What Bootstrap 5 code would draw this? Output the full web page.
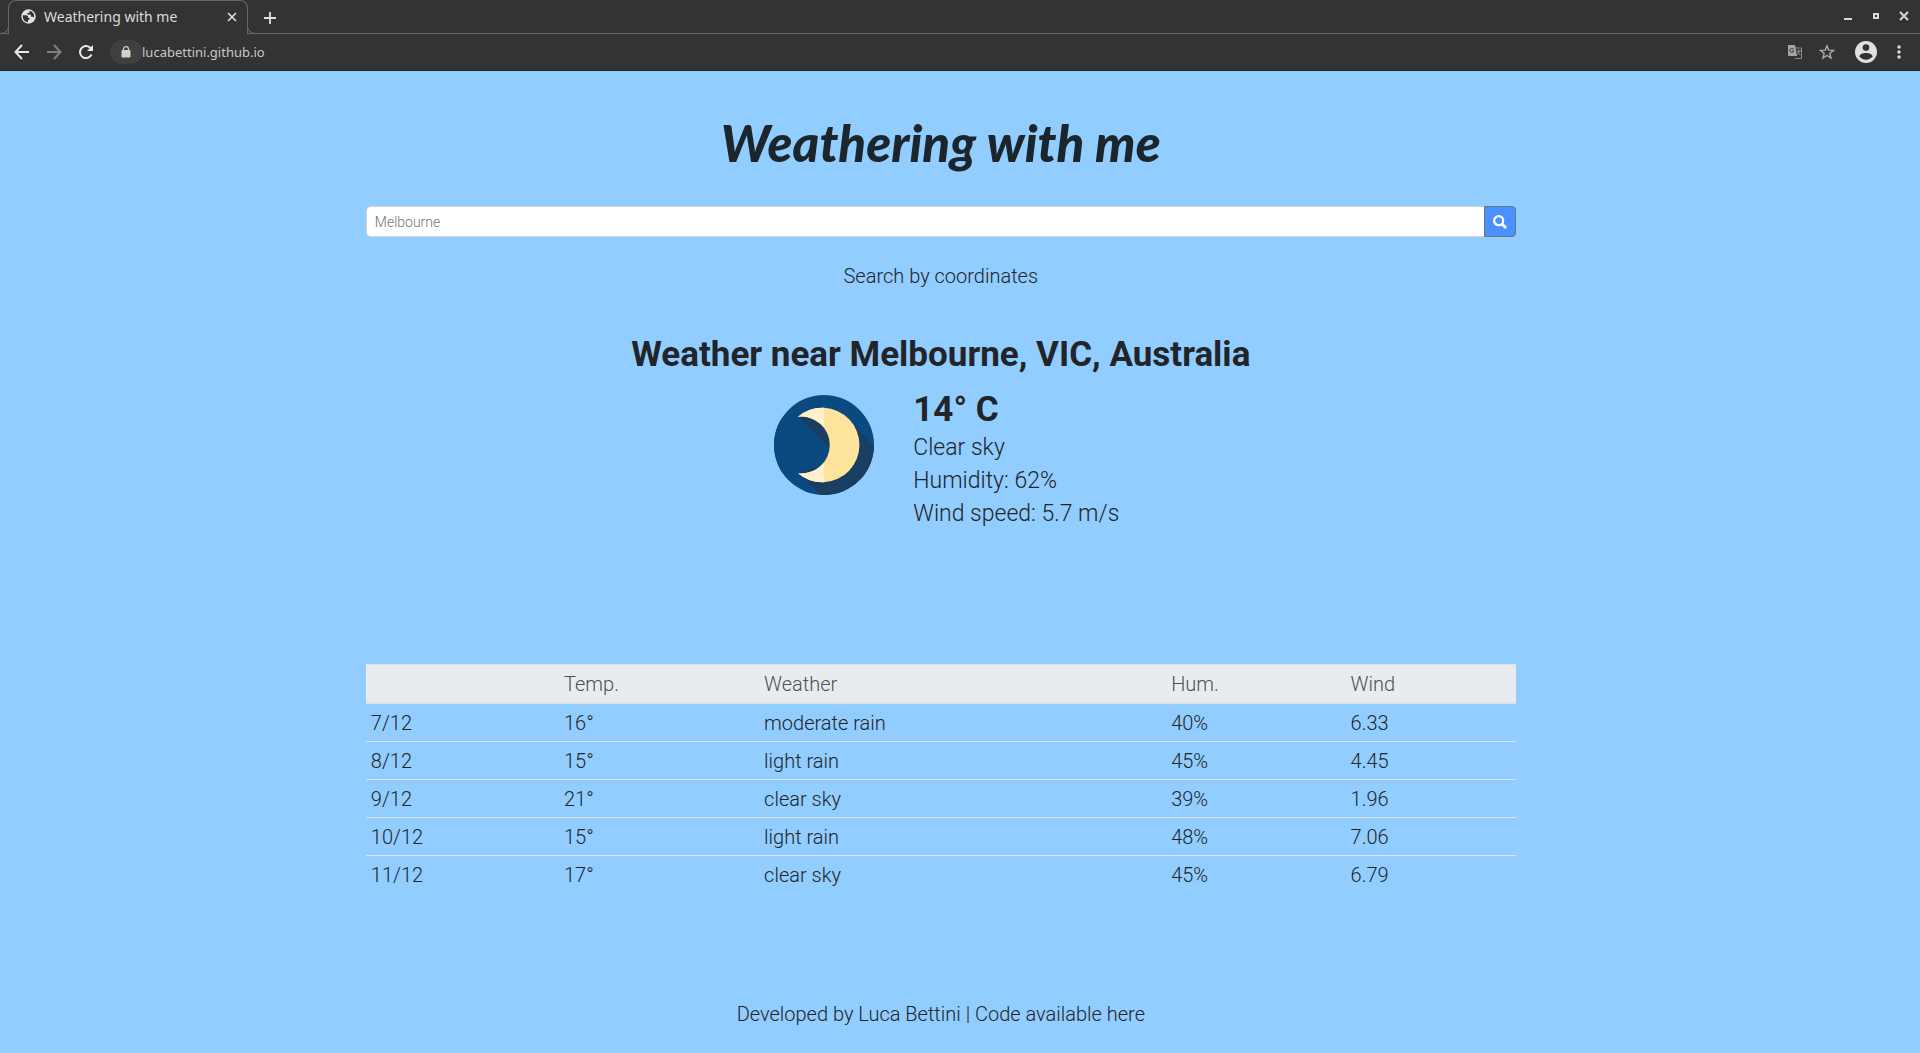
<!DOCTYPE html>
<html lang="en">
<head>
<meta charset="utf-8">
<meta name="viewport" content="width=device-width, initial-scale=1">
<title>Weathering with me</title>
<link href="https://cdn.jsdelivr.net/npm/bootstrap@5.3.0/dist/css/bootstrap.min.css" rel="stylesheet">
<style>
body{background:#92cdff;color:#212529;font-family:Roboto,"Liberation Sans",sans-serif;font-weight:300;font-size:20px;line-height:30px}
a{color:inherit;text-decoration:none}
svg{display:block;flex:none}
.browser{background:#333;color:#dcdcdc;font-family:"Noto Sans",sans-serif;font-weight:400;font-size:14px;line-height:20px;border-bottom:1px solid #262626}
.browser button{background:none;border:0;padding:0;color:inherit}
.tabstrip{height:34px;border-bottom:1px solid #666}
.tab{position:relative;width:240px;height:34px;margin-left:8px;padding:0 10px 2px 12px;background:#333;border:1px solid #666;border-bottom:0;border-radius:8px 8px 0 0}
.tab::before,.tab::after{content:"";position:absolute;bottom:0;width:9px;height:9px;background:#333;border-bottom:1px solid #666}
.tab::before{left:-9px;border-right:1px solid #666;border-bottom-right-radius:8px}
.tab::after{right:-9px;border-left:1px solid #666;border-bottom-left-radius:8px}
.window-controls{padding:0 10px 2px 0}
.toolbar{height:36px;padding:0 19px 0 14px}
.chip{width:32px;height:24px;border-radius:12px;background:#404040}
.address{background:none;border:0;outline:0;padding:0;color:#c8c8c8;font-size:13px}
.page{padding-right:2%}
.column{max-width:1150px}
.brand{font-family:Lato,sans-serif;font-style:italic;font-weight:900;font-size:51px;line-height:68px;margin:38px 0 29px;color:#1b262c}
.search .form-control{height:31px;font-size:14px;font-weight:300;border-color:#ced4da}
.search .form-control::placeholder{color:#6c757d}
.search .btn{width:32px;background:#4991ff;border-color:#6c757d;color:#fff}
.place,.degrees{font-size:35px;line-height:42px;font-weight:700}
.place{margin:43px 0 13px}
.now{font-size:23px;line-height:33px;column-gap:39px;min-height:275px;padding-left:12px}
.moon{margin-top:6px}
.forecast{--bs-table-bg:transparent;--bs-table-color:#212529;color:#212529;border-color:#dee2e6}
.forecast>:not(caption)>*>*{padding:5px 5px 3px;border-bottom:0;border-top:1px solid #dee2e6;line-height:29px}
.forecast thead th{background:#e9ecef;color:#495057;font-weight:300;border-bottom:2px solid #dee2e6}
.forecast tbody tr:first-child>*{border-top:0}
.c-day{width:16.8%}.c-temp{width:17.4%}.c-sky{width:35.4%}.c-hum{width:15.6%}
.credits{padding-top:58px}
</style>
<script src="https://cdn.jsdelivr.net/npm/bootstrap@5.3.0/dist/js/bootstrap.bundle.min.js"></script>
</head>
<body>
<header class="browser">
  <div class="tabstrip d-flex align-items-start">
    <div class="tab d-flex align-items-center">
      <svg width="15" height="15" viewBox="0 0 15 15" class="me-2"><circle cx="7.500" cy="7.500" r="7.200" fill="#e4e4e4"/><path d="M1.800 6.300H5q2 0 2 1.500v1h1.500v2H7v2.500C3.500 13 1.400 10 1.800 6.300zM8.500 1.800V3q0 1-1.200 1H6.200v1.500H9q1 0 1 1v1.300h1.200q1 0 1.400 1 1-2 .2-3.800Q11.500 2.300 8.500 1.800z" fill="#333"/></svg>
      <span>Weathering with me</span>
      <button class="ms-auto" aria-label="Close tab"><svg width="10" height="10" viewBox="0 0 10 10" stroke="#e0e0e0" stroke-width="1.600"><path d="M1 1l8 8M9 1l-8 8"/></svg></button>
    </div>
    <button class="ms-3 mt-2 pt-1" aria-label="New tab"><svg width="12" height="12" viewBox="0 0 12 12" stroke="#e0e0e0" stroke-width="1.800"><path d="M6 0v12M0 6h12"/></svg></button>
    <div class="window-controls ms-auto d-flex gap-3 align-items-center h-100">
      <button aria-label="Minimize"><svg width="12" height="12" viewBox="0 0 12 12"><path d="M2 8h8v2H2z" fill="#d8d8d8"/></svg></button>
      <button aria-label="Restore"><svg width="12" height="12" viewBox="0 0 12 12"><path d="M4 4h4v4H4z" fill="none" stroke="#d8d8d8" stroke-width="2"/></svg></button>
      <button aria-label="Close"><svg width="12" height="12" viewBox="0 0 12 12" stroke="#d8d8d8" stroke-width="2"><path d="M2 2l8 8M10 2l-8 8"/></svg></button>
    </div>
  </div>
  <div class="toolbar d-flex align-items-center">
    <button aria-label="Back"><svg width="16" height="16" viewBox="0 0 16 16" fill="none" stroke="#e8e8e8" stroke-width="2"><path d="M15 8H2M8 1L1.500 8 8 15"/></svg></button>
    <button class="ms-3" aria-label="Forward"><svg width="16" height="16" viewBox="0 0 16 16" fill="none" stroke="#808080" stroke-width="2"><path d="M1 8h13M8 1l6.500 7L8 15"/></svg></button>
    <button class="ms-3" aria-label="Reload"><svg width="16" height="16" viewBox="0 0 16 16" fill="none"><path d="M13.500 10.500A6 6 0 1 1 12 3.600L14 6" stroke="#e8e8e8" stroke-width="2"/><path d="M15 1v6H9z" fill="#e8e8e8"/></svg></button>
    <span class="chip d-flex align-items-center justify-content-center ms-3"><svg width="10" height="12" viewBox="0 0 10 12"><path d="M1 4.500h8V11H1z" fill="#d0d0d0" stroke="#d0d0d0" stroke-linejoin="round"/><path d="M2.500 5V3.200a2.500 2.500 0 0 1 5 0V5" fill="none" stroke="#d0d0d0" stroke-width="1.200"/></svg></span>
    <input class="address flex-grow-1" aria-label="Address" value="lucabettini.github.io">
    <button aria-label="Translate"><svg width="16" height="16" viewBox="0 0 16 16"><path d="M8 4h6.500v10.500H8" fill="none" stroke="#8c8c8c"/><path d="M1 1h7l2 11H2q-1 0-1-1z" fill="#a5a5a5"/><path d="M6.500 5.200a2 2 0 1 0 .3 1.700H5" fill="none" stroke="#404040"/><path d="M9.500 7H14M12 6v1c0 2-1 3-2 4M11 8c.3 1.500 1.500 2.500 2.500 3" fill="none" stroke="#929292"/></svg></button>
    <button class="ms-3" aria-label="Bookmark"><svg width="16" height="16" viewBox="0 0 16 16"><path d="M8 1.800l1.700 4.300 4.700.3-3.600 3 1.200 4.600L8 11.500 4 14l1.200-4.600-3.600-3 4.700-.3z" fill="none" stroke="#b0b0b0" stroke-width="1.300"/></svg></button>
    <button class="ms-3 ps-1" aria-label="Profile"><svg width="22" height="22" viewBox="0 0 22 22"><circle cx="11" cy="11" r="11" fill="#e0e0e0"/><circle cx="11" cy="6.600" r="3.300" fill="#333"/><path d="M4.300 15.600c0-2.200 3.400-3.700 6.700-3.700s6.700 1.500 6.700 3.700c-1.500 2-4 3.200-6.700 3.200s-5.200-1.200-6.700-3.200z" fill="#333"/></svg></button>
    <button class="ms-3 ps-1" aria-label="Menu"><svg width="4" height="14" viewBox="0 0 4 14" fill="#e0e0e0"><circle cx="2" cy="2" r="1.700"/><circle cx="2" cy="7" r="1.700"/><circle cx="2" cy="12" r="1.700"/></svg></button>
  </div>
</header>
<div class="page">
  <main class="column mx-auto">
    <h1 class="brand text-center">Weathering with me</h1>
    <form class="search input-group input-group-sm">
      <input class="form-control" type="text" placeholder="Melbourne" aria-label="City">
      <button class="btn p-0 d-flex align-items-center justify-content-center" type="button" aria-label="Search"><svg width="14" height="14" viewBox="0 0 14 14" fill="none" stroke="currentColor" stroke-width="2.200"><circle cx="5.700" cy="5.700" r="4.500"/><path d="M9 9l4 4" stroke-width="2.800"/></svg></button>
    </form>
    <p class="text-center mt-4 mb-0"><a href="#">Search by coordinates</a></p>
    <section>
      <h2 class="place text-center">Weather near Melbourne, VIC, Australia</h2>
      <div class="now d-flex justify-content-center">
        <svg class="moon" width="100" height="100" viewBox="0 0 100 100" role="img" aria-label="Clear night"><defs><clipPath id="disc"><circle cx="50" cy="50" r="50"/></clipPath></defs><g clip-path="url(#disc)"><path d="M0 0h100v100H0z" fill="#0b4a80"/><path d="M24 22L56 54 50 70 24 78 76 130H130V81L80 31 50 15z" fill="#193e61"/><path d="M0 22H24L56 54 50 70 24 78H0z" fill="#0b4a80"/></g><path d="M24 21.800A37.200 37.200 0 1 1 24 78.200 28.400 28.400 0 1 0 24 21.800z" fill="#fee39b"/><path d="M24 21.800A37.200 37.200 0 0 1 50 12.800V32.500A28.400 28.400 0 0 0 24 21.800zM24 78.200A37.200 37.200 0 0 0 50 87.200V67.500A28.400 28.400 0 0 1 24 78.200z" fill="#fff0cd"/></svg>
        <div>
          <div class="degrees">14° C</div>
          <div>Clear sky</div>
          <div>Humidity: 62%</div>
          <div>Wind speed: 5.7 m/s</div>
        </div>
      </div>
    </section>
    <table class="forecast table mb-5">
      <colgroup><col class="c-day"><col class="c-temp"><col class="c-sky"><col class="c-hum"><col></colgroup>
      <thead><tr><th></th><th>Temp.</th><th>Weather</th><th>Hum.</th><th>Wind</th></tr></thead>
      <tbody>
        <tr><td>7/12</td><td>16°</td><td>moderate rain</td><td>40%</td><td>6.33</td></tr>
        <tr><td>8/12</td><td>15°</td><td>light rain</td><td>45%</td><td>4.45</td></tr>
        <tr><td>9/12</td><td>21°</td><td>clear sky</td><td>39%</td><td>1.96</td></tr>
        <tr><td>10/12</td><td>15°</td><td>light rain</td><td>48%</td><td>7.06</td></tr>
        <tr><td>11/12</td><td>17°</td><td>clear sky</td><td>45%</td><td>6.79</td></tr>
      </tbody>
    </table>
  </main>
  <footer class="credits text-center">Developed by <a href="#">Luca Bettini</a> | Code available <a href="#">here</a></footer>
</div>
</body>
</html>
